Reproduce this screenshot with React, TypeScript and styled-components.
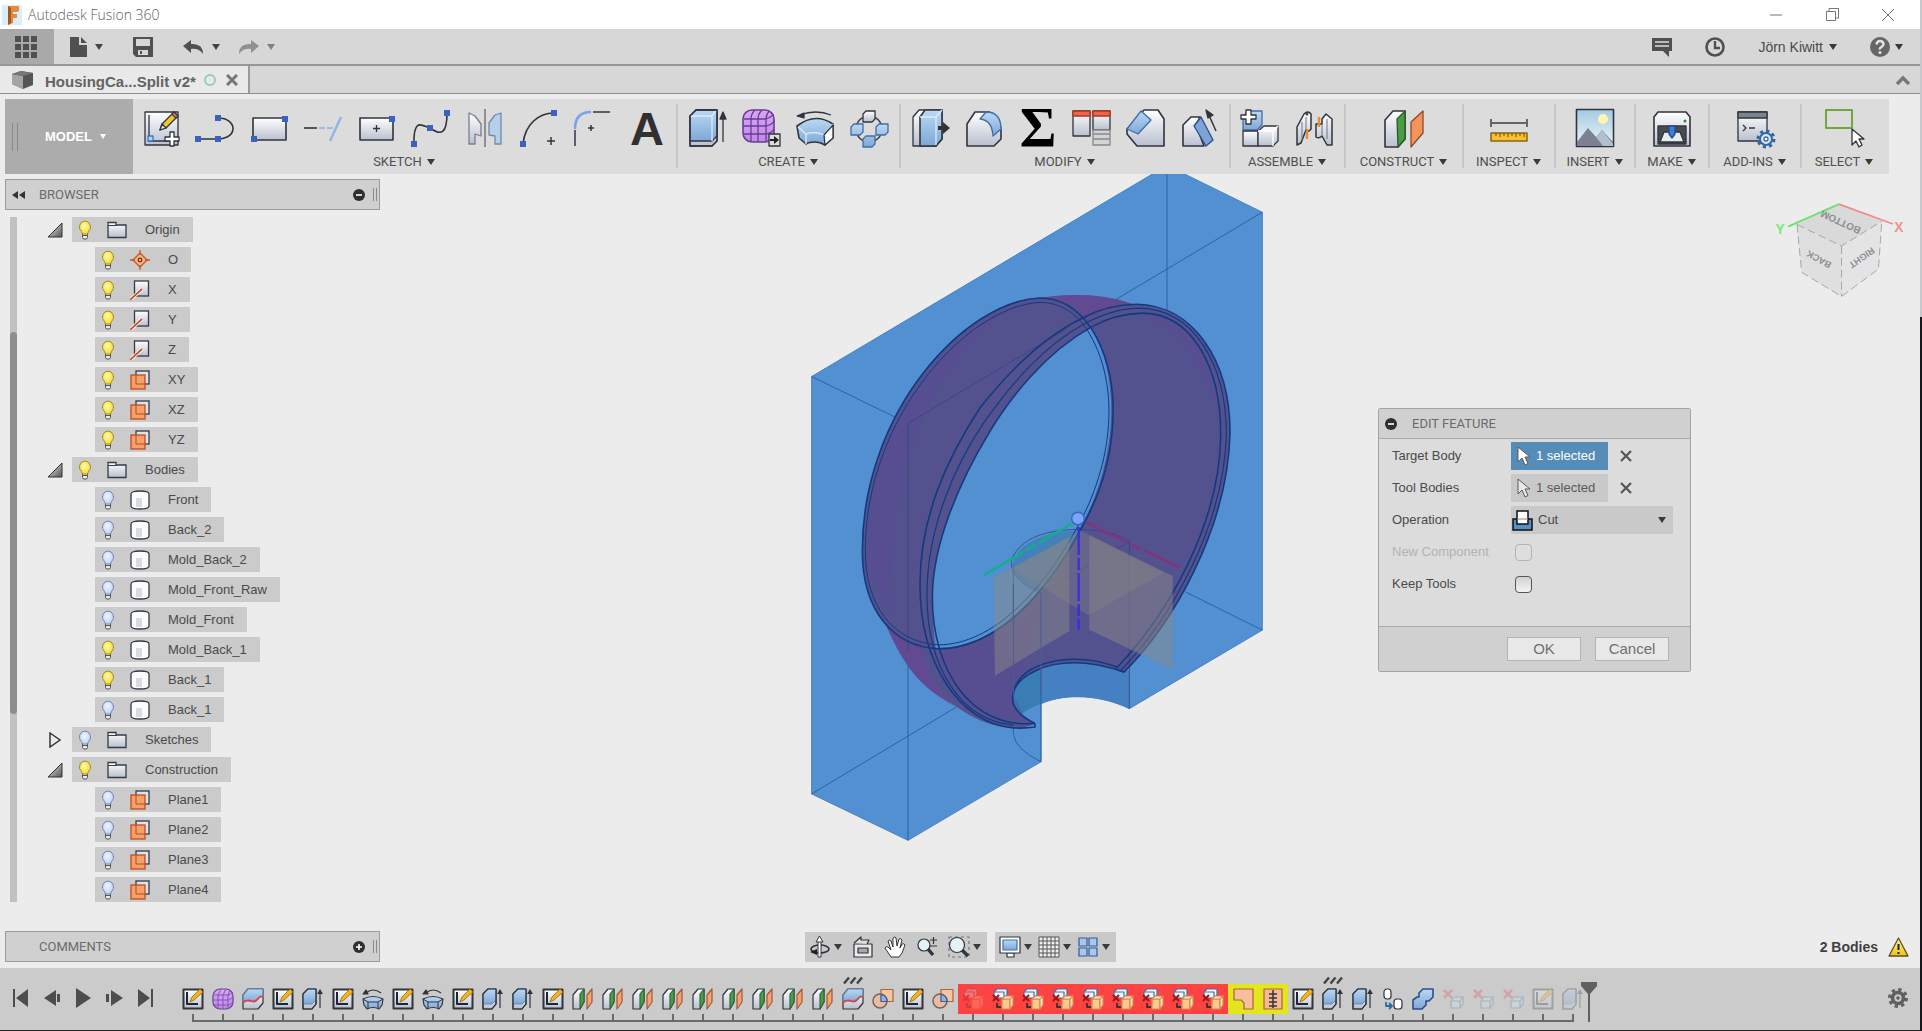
import React from 'react';
import styled, { createGlobalStyle } from 'styled-components';

const sans = '"Liberation Sans", Arial, sans-serif';
const caps = 'Roboto, "Liberation Sans", sans-serif';

const Global = createGlobalStyle`
  * { box-sizing: border-box; }
  html, body, #root { height: 100%; }
  body { margin: 0; font: 13px/16px ${sans}; color: #4a4a4a; background: #ececec; overflow: hidden; }
  button, select, input { font: inherit; color: inherit; margin: 0; }
  svg { display: block; flex: none; }
`;

/* ---------- shell ---------- */
const Screen = styled.div`
  display: flex;
  min-height: 100vh;
`;
const Shell = styled.div`
  flex: 1;
  min-width: 0;
  display: flex;
  flex-direction: column;
  background: #ececec;
  border-bottom: 1px solid #222;
`;
const DesktopEdge = styled.div`
  width: 2px;
  background: linear-gradient(#c4c8ca 0 317px, #16181b 317px);
`;
const IconButton = styled.button<{ $w?: number; $h?: number }>`
  display: flex;
  align-items: center;
  justify-content: center;
  width: ${p => (p.$w ? `${p.$w}px` : 'auto')};
  height: ${p => (p.$h ? `${p.$h}px` : 'auto')};
  padding: 0;
  border: 0;
  background: none;
  flex: none;
`;
const Caret = styled.span<{ $color?: string; $size?: number }>`
  display: inline-block;
  flex: none;
  width: 0;
  height: 0;
  border-style: solid;
  border-width: ${p => p.$size ?? 6}px ${p => (p.$size ?? 6) - 2}px 0;
  border-color: ${p => p.$color ?? '#3a3a3a'} transparent transparent;
`;

/* ---------- title bar ---------- */
const TitleBar = styled.header`
  display: flex;
  align-items: center;
  height: 29px;
  padding: 0 4px 0 2px;
  background: #fff;
`;
const Title = styled.h1`
  flex: 1;
  margin: 0 0 0 6px;
  font: 300 14px/20px "Open Sans", "Noto Sans", sans-serif;
  color: #5f5f5f;
`;
const WindowButtons = styled.div`
  display: flex;
`;

/* ---------- application bar ---------- */
const AppBar = styled.div`
  display: flex;
  align-items: stretch;
  height: 37px;
  background: #d7d7d7;
  border-bottom: 2px solid #979797;
`;
const GridButton = styled(IconButton)`
  width: 54px;
  padding-right: 3px;
  background: #a9a9a9;
`;
const AppTools = styled.div`
  display: flex;
  align-items: center;
  padding-left: 16px;
  gap: 30px;
  flex: 1;
`;
const History = styled.div`
  display: flex;
  align-items: center;
  gap: 18px;
`;
const MenuButton = styled(IconButton)<{ $gap?: number }>`
  gap: ${p => p.$gap ?? 8}px;
`;
const AppAccount = styled.div`
  display: flex;
  align-items: center;
  gap: 33px;
  padding-right: 17px;
  font-size: 14px;
`;

/* ---------- document tabs ---------- */
const TabBar = styled.div`
  display: flex;
  justify-content: space-between;
  height: 28px;
  background: #d7d7d7;
  border-bottom: 1px solid #8f8f8f;
`;
const Tab = styled.div`
  display: flex;
  align-items: center;
  width: 250px;
  padding-left: 12px;
  border-right: 2px solid #999;
  background: #e9e9e9;
`;
const TabName = styled.span`
  margin: 4px 8px 0 12px;
  font-weight: 700;
  font-size: 15px;
  color: #636363;
  white-space: nowrap;
`;
const TabState = styled.span`
  width: 12px;
  height: 12px;
  margin-right: 10px;
  border: 2px solid #93cfb4;
  border-radius: 50%;
`;

/* ---------- ribbon ---------- */
const Ribbon = styled.nav`
  display: flex;
  align-items: stretch;
  align-self: flex-start;
  height: 75px;
  margin: 5px 0 0 5px;
  background: #dcdcdc;
`;
const Workspace = styled.button`
  display: flex;
  align-items: center;
  width: 128px;
  padding: 0 0 0 7px;
  border: 0;
  background: #acacac;
  color: #fff;
  font-size: 13px;
  font-weight: 700;
  gap: 8px;
`;
const Grip = styled.span<{ $h: number }>`
  width: 6px;
  height: ${p => p.$h}px;
  border: solid #8a8a8a;
  border-width: 0 1px;
`;
const ModelName = styled.span`
  margin-left: 19px;
`;
const Group = styled.div<{ $w?: number }>`
  position: relative;
  display: flex;
  flex-direction: column;
  align-items: center;
  min-width: ${p => (p.$w ? `${p.$w}px` : '0')};
  padding: 9px 11px 0 8px;
  &:not(:last-child)::after {
    content: '';
    position: absolute;
    right: 0;
    top: 5px;
    width: 2px;
    height: 64px;
    background: #c6c6c6;
  }
`;
const GroupIcons = styled.div`
  display: flex;
  gap: 14px;
`;
const GroupLabel = styled.button`
  display: flex;
  align-items: center;
  gap: 5px;
  padding: 0;
  border: 0;
  background: none;
  margin-top: 6px;
  font: 13px/16px ${caps};
  color: #4f4f4f;
  white-space: nowrap;
`;

/* ---------- canvas ---------- */
const Viewport = styled.main`
  position: relative;
  flex: 1;
  min-height: 0;
  display: flex;
  flex-direction: column;
  justify-content: space-between;
  padding: 5px 5px 6px;
  overflow: hidden;
`;
const Scene = styled.div`
  position: absolute;
  top: 0;
  left: calc(50% - 180px);
`;
const CubeSpot = styled.div`
  position: absolute;
  top: 6px;
  right: 0;
`;
const PanelHead = styled.div`
  display: flex;
  align-items: center;
  width: 375px;
  height: 31px;
  padding: 0 2px 0 6px;
  border: 1px solid #9b9b9b;
  background: #d0d0d0;
  font: 13px/16px ${caps};
  color: #6b6b6b;
`;
const PanelTitle = styled.h2`
  flex: 1;
  margin: 0 0 0 14px;
  font: inherit;
`;
const PanelGrip = styled(Grip)`
  width: 4px;
  margin-left: 8px;
`;
const Browser = styled.section`
  position: relative;
  display: flex;
  flex-direction: column;
  width: 375px;
`;
const TreeArea = styled.div`
  display: flex;
  margin-top: 7px;
`;
const ScrollTrack = styled.div`
  width: 7px;
  margin-left: 5px;
  background: #c1c1c1;
`;
const ScrollThumb = styled.div`
  height: 382px;
  margin-top: 115px;
  border-radius: 4px;
  background: #8e8e8e;
`;
const Tree = styled.ul`
  margin: 0 0 0 30px;
  padding: 0;
  list-style: none;
  display: flex;
  flex-direction: column;
  gap: 5px;
`;
const TreeLine = styled.li<{ $child?: boolean }>`
  display: flex;
  align-items: center;
  gap: 9px;
  padding-left: ${p => (p.$child ? '48px' : '0')};
`;
const TreeRow = styled.div<{ $child?: boolean }>`
  display: flex;
  align-items: center;
  height: 25px;
  padding: 0 13px 0 6px;
  background: #cbcbcb;
  white-space: nowrap;
  & > svg { margin-right: 18px; margin-left: 15px; }
`;

const BottomRow = styled.div`
  position: relative;
  display: grid;
  grid-template-columns: 1fr auto 1fr;
  align-items: center;
`;
const NavBars = styled.div`
  display: flex;
  gap: 8px;
`;
const NavGroup = styled.div<{ $gap: number }>`
  display: flex;
  align-items: center;
  height: 30px;
  padding: 0 6px 0 4px;
  gap: ${p => p.$gap}px;
  background: #c9c9c9;
`;
const NavMenu = styled(MenuButton)`
  gap: 3px;
`;
const Status = styled.div`
  display: flex;
  align-items: center;
  justify-content: flex-end;
  gap: 10px;
  padding-right: 6px;
  font-size: 14px;
  font-weight: 700;
  color: #3f3f3f;
`;

/* ---------- dialog ---------- */
const Dialog = styled.form`
  position: absolute;
  top: 234px;
  right: 229px;
  width: 313px;
  border: 1px solid #a3a3a3;
  border-radius: 2px;
  background: #dcdcdc;
`;
const DialogHead = styled.div`
  display: flex;
  align-items: center;
  height: 30px;
  padding-left: 6px;
  gap: 15px;
  border-bottom: 1px solid #a9a9a9;
  background: #d0d0d0;
  font: 13px/16px ${caps};
  color: #6b6b6b;
`;
const DialogBody = styled.div`
  display: grid;
  grid-template-columns: 119px auto;
  grid-auto-rows: 28px;
  row-gap: 4px;
  align-items: center;
  padding: 3px 16px 28px 13px;
`;
const FieldLabel = styled.label<{ $off?: boolean }>`
  color: ${p => (p.$off ? '#b3b3b3' : '#4a4a4a')};
`;
const Field = styled.div`
  position: relative;
  display: flex;
  align-items: center;
  gap: 12px;
`;
const Picker = styled.button<{ $active?: boolean }>`
  display: flex;
  align-items: center;
  gap: 6px;
  width: 97px;
  height: 28px;
  padding: 0 0 0 6px;
  border: 0;
  background: ${p => (p.$active ? '#558cb8' : '#c9c9c9')};
  color: ${p => (p.$active ? '#fff' : '#5a5a5a')};
`;
const OperationSelect = styled.select`
  appearance: none;
  width: 162px;
  height: 28px;
  padding: 0 0 0 27px;
  border: 0;
  border-radius: 0;
  background: #c9c9c9;
`;
const OverLeft = styled.span`
  position: absolute;
  left: 1px;
  pointer-events: none;
`;
const OverRight = styled.span`
  position: absolute;
  right: 8px;
  display: flex;
  pointer-events: none;
`;
const Check = styled.input`
  appearance: none;
  width: 17px;
  height: 17px;
  margin-left: 4px;
  border: 1px solid #555;
  border-radius: 4px;
  background: linear-gradient(#d2d2d2, #f2f2f2);
  &:disabled { border-color: #b4b4b4; background: #dedede; }
`;
const DialogFoot = styled.div`
  display: flex;
  justify-content: flex-end;
  gap: 14px;
  padding: 10px 21px;
  border-top: 1px solid #a9a9a9;
  background: #d0d0d0;
`;
const DialogButton = styled.button`
  width: 74px;
  height: 24px;
  padding: 0;
  border: 1px solid #b3b3b3;
  background: #e8e8e8;
  font-size: 15px;
  color: #707070;
`;

/* ---------- timeline ---------- */
const Timeline = styled.footer`
  display: flex;
  align-items: flex-start;
  height: 62px;
  padding: 14px 12px 0 11px;
  background: #cbcbcb;
`;
const Transport = styled.div`
  display: flex;
  gap: 11px;
  padding-top: 6px;
  width: 167px;
`;
const Steps = styled.ol`
  display: flex;
  margin: 0;
  padding: 2px 0 0;
  list-style: none;
`;
const Step = styled.li<{ $tone?: string; $faded?: boolean }>`
  position: relative;
  width: 30px;
  & > button {
    width: 30px;
    height: 30px;
    background: ${p => (p.$tone === 'error' ? '#fd4242' : p.$tone === 'warn' ? '#e3e61c' : 'none')};
  }
  & > button > svg { opacity: ${p => (p.$faded ? 0.28 : 1)}; }
`;
const Tick = styled.span<{ $edge?: 'first' | 'last' }>`
  display: block;
  height: 8px;
  background:
    linear-gradient(#6a6a6a, #6a6a6a) center top / 2px 8px no-repeat,
    linear-gradient(#6a6a6a, #6a6a6a) ${p => (p.$edge === 'first' ? 'right' : 'left')} bottom / ${p => (p.$edge ? '16px' : '30px')} 2px no-repeat;
`;
const HatchMark = styled.span`
  position: absolute;
  top: -7px;
  left: 5px;
`;
const Marker = styled.svg`
  margin-left: -7px;
  position: relative;
`;
const TimelineEnd = styled.div`
  flex: 1;
  display: flex;
  justify-content: flex-end;
  padding-top: 5px;
`;

/* ---------- shared gradients ---------- */
const PaintSheet = styled.svg`
  position: absolute;
`;
const Paint = () => (
  <PaintSheet width="0" height="0" aria-hidden="true">
    <defs>
      <linearGradient id="gray" x1="0" y1="0" x2="0" y2="1"><stop offset="0" stopColor="#fff" /><stop offset="1" stopColor="#b9c0cf" /></linearGradient>
      <linearGradient id="blue" x1="0" y1="0" x2="0" y2="1"><stop offset="0" stopColor="#bcd9f3" /><stop offset="1" stopColor="#7ea6d6" /></linearGradient>
      <linearGradient id="violet" x1="0" y1="0" x2="0" y2="1"><stop offset="0" stopColor="#d9a5f5" /><stop offset="1" stopColor="#c08ae8" /></linearGradient>
      <linearGradient id="tri" x1="0" y1="0" x2="1" y2="1"><stop offset="0" stopColor="#eee" /><stop offset="1" stopColor="#555" /></linearGradient>
      <linearGradient id="sky" x1="0" y1="0" x2="0" y2="1"><stop offset="0" stopColor="#a3cbe4" /><stop offset="1" stopColor="#eef6f6" /></linearGradient>
      <linearGradient id="amber" x1="0" y1="0" x2="0" y2="1"><stop offset="0" stopColor="#fff6a0" /><stop offset="1" stopColor="#f2c500" /></linearGradient>
      <radialGradient id="lit" cx=".45" cy=".4" r=".6"><stop offset="0" stopColor="#fffbb0" /><stop offset="1" stopColor="#f5dc2a" /></radialGradient>
      <radialGradient id="unlit" cx=".45" cy=".4" r=".6"><stop offset="0" stopColor="#f0f5ff" /><stop offset="1" stopColor="#bfd2f5" /></radialGradient>
    </defs>
  </PaintSheet>
);

type Kids = { children: React.ReactNode };
const Big = ({ children }: Kids) => (
  <svg width="40" height="40" viewBox="0 0 40 40" overflow="visible" fill="none" stroke="#30343c" strokeWidth="1.3" strokeLinejoin="round">{children}</svg>
);
const Small = ({ children }: Kids) => (
  <svg width="22" height="22" viewBox="0 0 22 22" fill="none" stroke="#30343c" strokeWidth="1.2" strokeLinejoin="round">{children}</svg>
);
const Node = ({ x, y }: { x: number; y: number }) => <rect x={x - 3} y={y - 3} width="6" height="6" fill="#3b62bd" stroke="none" />;

const ribbonIcons: Record<string, React.ReactNode> = {
  'Create Sketch': <Big><rect x="4" y="4" width="33" height="33" fill="url(#gray)" /><path d="M8 7v26h20" /><rect x="7" y="28" width="5" height="5" stroke="#3b74c4" fill="#b4d2f2" /><path d="M19 22l2-6L33 4l4 4-12 12z" fill="#f4c430" /><path d="M31 6l2-2 4 4-2 2z" fill="#ef8a7a" /><path d="M19 22l2-6 4 4z" fill="#f8e6c2" /><path d="M29 24h4v5h5v4h-5v5h-4v-5h-5v-4h5z" fill="#fff" /></Big>,
  Line: <Big><path d="M3 31H23C43 31 43 10 23 10" strokeWidth="1.6" /><Node x={3} y={31} /><Node x={23} y={31} /><Node x={23} y={10} /></Big>,
  Rectangle: <Big><rect x="4" y="10" width="33" height="22" fill="url(#gray)" strokeWidth="1.6" /><Node x={36} y={11} /><Node x={5} y={31} /></Big>,
  Trim: <Big><path d="M1 20h13" strokeWidth="1.6" /><path d="M16 20h6M24 20h6" stroke="#84aee0" strokeWidth="1.6" /><path d="M38 9L27 33" stroke="#8fb5e6" strokeWidth="2.4" /></Big>,
  'Center Rectangle': <Big><rect x="3" y="10" width="33" height="22" fill="url(#gray)" strokeWidth="1.6" /><path d="M16 20.5h7M19.500 17v7" /><Node x={35} y={11} /></Big>,
  Spline: <Big><path d="M3 36C2 6 14 20 19 20C30 28 36 26 36 5" strokeWidth="1.6" /><Node x={3} y={36} /><Node x={19} y={20} /><Node x={36} y={5} /></Big>,
  Mirror: <Big><path d="M4 5l6 3 6 8v12l-6-2v10H4z" fill="url(#gray)" stroke="#777f8c" /><path d="M20 1v38" stroke="#666" /><path d="M36 5l-6 2-6 8v12l6 1v8h6z" fill="#b7d0ea" stroke="#6d8bb0" /></Big>,
  Arc: <Big><path d="M4 36C6 16 20 5 35 5" strokeWidth="1.7" /><Node x={4} y={36} /><Node x={35} y={5} /><path d="M28 33h8M32 29v8" strokeWidth="1.5" /></Big>,
  Fillet: <Big><path d="M2 38V22M20 4H37M15 20h6M18 17v6" strokeWidth="1.5" /><path d="M2 21C2 9 8 4 18 4" stroke="#79a3ea" strokeWidth="2.6" /></Big>,
  Text: <Big><text x="20" y="37" textAnchor="middle" fontFamily="Liberation Sans" fontWeight="700" fontSize="47" fill="#303030" stroke="none">A</text></Big>,
  Extrude: <Big><path d="M3 8l6-6h21v31l-5 5H3z" fill="url(#gray)" /><path d="M3 8l6-6h21v26l-5 5H3z" fill="url(#blue)" /><path d="M3 8h22v25M25 8l5-6" stroke="#d9ecff" /><path d="M3 8l6-6h21v31l-5 5H3z" /><path d="M36 34V8" /><path d="M36 4l-3 7h6z" fill="#30343c" /></Big>,
  'Create Form': <Big><rect x="2" y="2" width="31" height="32" rx="9" fill="url(#violet)" stroke="#6a3d94" strokeWidth="1.6" /><path d="M3 11h21q6-1 8-5M2 18h23q6-1 8-5M3 26h22q6-1 8-5M10 34V11q0-5 4-9M17 34V11q0-5 4-9M25 33V11q0-4 3-8" stroke="#6a3d94" /><rect x="28" y="26" width="11" height="12" fill="#ddd" /><path d="M29 31h4v-3l5 4-5 4v-3h-4z" fill="#222" stroke="none" /></Big>,
  Revolve: <Big><path d="M2 18q18-14 36-2v14l-8 7q-5-3-10-3-6 0-9 2l-7-6z" fill="url(#blue)" strokeWidth="1.6" /><path d="M3 19l8 7q9-3 18 1l9-11M11 26v10" stroke="#e0efff" /><path d="M29 27l9-10v13l-8 7z" fill="#fff" /><path d="M5 7q16-6 31 0" /><path d="M2 8l7-3v5z" fill="#30343c" /></Big>,
  Pattern: <Big><circle cx="20" cy="21" r="13" stroke="#444" strokeWidth="1.6" /><path d="M14 6l3-3h9v8l-3 3h-9z" fill="url(#gray)" /><path d="M2 19l3-3h9v8l-3 3H2zM27 19l3-3h9v8l-3 3h-9zM14 31l3-3h9v8l-3 3h-9z" fill="url(#blue)" stroke="#3f6ea8" /></Big>,
  'Press Pull': <Big><path d="M3 9l6-7h23v29l-6 7H3z" fill="url(#gray)" /><path d="M10 9l5-7h17v29l-6 7H10z" fill="url(#blue)" strokeWidth="1.6" /><path d="M10 9h16v28M26 9l6-7" stroke="#d9ecff" /><path d="M28 18h5v-4l7 6-7 6v-4h-5z" fill="#333" stroke="none" /></Big>,
  'Fillet Edge': <Big><path d="M3 16l8-12h14q12 4 12 20v7l-7 7H3z" fill="url(#gray)" strokeWidth="1.6" /><path d="M16 11l6-7q15 0 15 17l-8 7q-1-16-13-17z" fill="url(#blue)" stroke="#3f6ea8" /></Big>,
  'Change Parameters': <Big><text x="20" y="39" textAnchor="middle" fontFamily="Liberation Serif" fontWeight="700" fontSize="56" fill="#000" stroke="none">Σ</text></Big>,
  Table: <Big><rect x="1" y="3" width="17" height="25" fill="url(#gray)" /><rect x="21" y="3" width="17" height="19" fill="url(#gray)" /><path d="M1 3h17v5H1zM21 3h17v5H21z" fill="#f0644a" stroke="#a33a28" /><path d="M21 22h17v4H21zM21 26h17v5H21zM21 31h17v6H21z" fill="#d2d4d8" stroke="#888" /></Big>,
  Chamfer: <Big><path d="M1 21L18 2h14l6 9v27H11L1 26z" fill="url(#gray)" strokeWidth="1.6" /><path d="M1 21L15 3l10 9-13 14z" fill="url(#blue)" stroke="#3f6ea8" /></Big>,
  Draft: <Big><path d="M3 17l8-8h9l-4 8 8 21H3z" fill="url(#gray)" strokeWidth="1.6" /><path d="M14 18l7-9 12 23-7 6z" fill="#7ea3d8" stroke="#274f8a" /><path d="M36 23L28 5" strokeWidth="1.5" /><path d="M26 2l7 5-5 3z" fill="#30343c" /></Big>,
  'New Component': <Big><path d="M3 9l5-6h14v14l-5 5H3z" fill="url(#blue)" stroke="#3f6ea8" /><path d="M3 23h15v15H3z" fill="url(#gray)" /><path d="M18 23l6-5h14v15l-5 5H18z" fill="url(#gray)" /><path d="M18 23h15v15M33 23l5-5" stroke="#fff" /><path d="M6 2h5v5h5v4h-5v5H6v-5H1V7h5z" fill="#fff" /></Big>,
  Joint: <Big><path d="M3 19l7-13q4-4 7 0v15q-3 4-5 1L7 35l-4 2z" fill="url(#gray)" strokeWidth="1.5" /><path d="M38 11l-6-5-4 5v5h-6v13q3 2 6-1l5 9 5 0z" fill="url(#gray)" strokeWidth="1.5" /><path d="M13 21v10M25 9v10" stroke="#ef8a30" strokeWidth="2.4" /><path d="M28 16v12M12 22V9M33 11v20M8 14v18" stroke="#6f7682" strokeWidth="1" /><circle cx="13" cy="6" r="1.500" fill="#444" stroke="none" /></Big>,
  Construct: <Big><path d="M1 12L9 3h12v28l-7 8H1z" fill="url(#gray)" strokeWidth="1.6" /><path d="M13 11l8-8v28l-7 8z" fill="#4b9b47" stroke="#235f26" /><path d="M27 14l12-11v22L27 39z" fill="#f4935a" stroke="#8c4b28" /></Big>,
  Inspect: <Big><path d="M2 15h36M2 11v8M38 11v8" stroke="#666" strokeWidth="2" /><rect x="2" y="25" width="36" height="8" fill="#f7bf31" stroke="#8a6412" strokeWidth="1.500" /><path d="M7 25v3M11 25v4M15 25v3M19 25v4M23 25v3M27 25v4M31 25v3M35 25v4" stroke="#6b4f14" strokeWidth="1" /></Big>,
  Insert: <Big><rect x="1.500" y="1.500" width="37" height="37" fill="url(#sky)" strokeWidth="1.600" /><circle cx="28" cy="11" r="5" fill="#fff5ae" stroke="none" /><path d="M2 34l11-14 8 9 6-7 11 12v4H2z" fill="#7b8092" stroke="none" /><path d="M21 29l6-7 11 14v2H28z" fill="#b2bfce" stroke="none" /></Big>,
  Make: <Big><path d="M6 4h28l4 5v29H2V9z" fill="url(#gray)" strokeWidth="1.600" /><rect x="6" y="18" width="28" height="18" fill="#474b52" /><path d="M12 24h16l4 10H8z" fill="#e8ecf0" /><path d="M17 18h6v8l-3 4-3-4z" fill="#3c7fd6" stroke="#1e4b94" /><circle cx="33" cy="13" r="1.500" fill="#2e8a2e" stroke="none" /></Big>,
  'Add-ins': <Big><rect x="3" y="4" width="29" height="29" fill="url(#gray)" /><rect x="3" y="4" width="29" height="6" fill="#7b828f" /><path d="M8 17l3 3-3 3M14 20h6" /><circle cx="31" cy="31" r="6" fill="#d8e8fa" stroke="#3466a5" strokeWidth="2" /><circle cx="31" cy="31" r="8" stroke="#3466a5" strokeWidth="3" strokeDasharray="3.140 3.140" /><circle cx="31" cy="31" r="2" fill="#fff" stroke="#3466a5" /></Big>,
  Select: <Big><rect x="2" y="2" width="26" height="18" stroke="#72a83a" strokeWidth="2" /><path d="M28 21v16l4-4 3 6 3-2-3-6h5z" fill="#fff" /></Big>,
};

const stepIcons: Record<string, React.ReactNode> = {
  Sketch: <><rect x="1.500" y="1.500" width="19" height="19" fill="url(#gray)" strokeWidth="2" /><path d="M5 4v12h11" stroke="#1c2733" strokeWidth="2" /><path d="M8 14l2-5 8-8 3 3-9 8z" fill="#f5b21e" stroke="#8d6a1a" strokeWidth=".8" /></>,
  Extrude: <><path d="M1 6l5-5h8v15l-4 5H1z" fill="url(#gray)" /><path d="M1 6l5-5h8v11l-4 4H1z" fill="url(#blue)" stroke="#557fb4" strokeWidth=".8" /><path d="M1 6l5-5h8v15l-4 5H1z" /><path d="M18 20V4" /><path d="M18 1l-3 5h6z" fill="#30343c" stroke="none" /></>,
  Plane: <><path d="M1 7l5-6h6v13l-4 7H1z" fill="url(#gray)" /><path d="M8 6l4-5v13l-4 7z" fill="#4e9b52" stroke="#2d6a33" /><path d="M15 7l5-6v13l-5 7z" fill="#f6a274" stroke="#a05a38" /></>,
  Split: <><path d="M1 7l5-6h15v14l-5 6H1z" fill="url(#gray)" /><path d="M1 7l5-6h15v8q-4-1-6 2t-8 2-6 1z" fill="url(#blue)" stroke="#5f7fa6" /><path d="M1 15q4-4 8-2t7-2 5-2" stroke="#e2453c" strokeWidth="1.600" /></>,
  Form: <><rect x="1" y="1" width="20" height="20" rx="7" fill="url(#violet)" stroke="#6a3d94" /><path d="M2 7h15l4-3M1 12h16l4-3M2 17h15l4-3M6 21V7l3-6M11 21V7l3-6M16 21V7l2-5" stroke="#8655b3" strokeWidth="1" /></>,
  Revolve: <><path d="M1 11q10-5 20 0l-1 6-3 4q-6-3-12 0l-3-4z" fill="url(#blue)" strokeWidth="1.200" /><path d="M1 11l5 3h10l5-3M6 14v6M16 14v6" strokeWidth="1" /><path d="M4 5q7-6 15 0" /><path d="M1 6l3-4 2 4z" fill="#30343c" /></>,
  Error: <><path d="M2 4l3-3h10v6l-3 3H2z" fill="#eef5fb" stroke="#4a6f9c" /><path d="M2 4h10v6" stroke="#4a6f9c" /><path d="M10 11h8v10h-8z" fill="#fbc98f" stroke="#d98a4c" /><path d="M10 11l3-3h8l-3 3zM18 11l3-3v9l-3 4z" fill="#fde3c6" stroke="#d98a4c" /><path d="M1 7l6 6M7 7l-6 6" stroke="#a81414" strokeWidth="2" /><path d="M5 15v4h4" strokeWidth="1.800" /></>,
  Intersect: <><rect x="9" y="1.500" width="12" height="12" fill="#f8c3a0" stroke="#a8643c" /><circle cx="8" cy="13" r="7" fill="#f6b791" fillOpacity=".7" stroke="#7b6258" strokeWidth="1.500" /><path d="M9 6.500q6 1 6 7H9z" fill="#8fb5e6" stroke="#345f9c" /></>,
  Patch: <path d="M2 1h19v20h-9v-6l-3-3H2z" fill="#f8c09a" stroke="#a8643c" />,
  Stitch: <><rect x="2" y="1" width="18" height="20" fill="#f8b894" stroke="#a8643c" /><path d="M11 2v18M7 6h8M7 10h8M7 14h8M7 18h8" strokeWidth="1.500" /></>,
  Copy: <><rect x="2" y="1" width="7" height="10" rx="3" fill="#fff" /><rect x="12" y="11" width="8" height="10" rx="3" fill="#fff" /><path d="M4 14v4h5M7 15l3 3-3 3" stroke="#2c6aa8" strokeWidth="1.800" /></>,
  Combine: <path d="M1 12l4-3h2V5l4-4h10v8l-4 4h-3v4l-4 4H1z" fill="url(#blue)" stroke="#2b4f86" strokeWidth="1.600" />,
  Remove: <><path d="M2 2l8 8M10 2l-8 8" stroke="#e04444" strokeWidth="2.600" /><path d="M9 13l3-4h9v7l-3 4H9z" fill="#cfe9f5" stroke="#3b7a9a" /><path d="M9 13h9v7M18 13l3-4" stroke="#3b7a9a" /></>,
};

type StepData = { kind: string; tone?: 'error' | 'warn'; faded?: boolean; hatch?: boolean };
const s = (kind: string, extra: Partial<StepData> = {}): StepData => ({ kind, ...extra });
const many = (n: number, step: StepData) => Array.from({ length: n }, () => step);
const steps: StepData[] = [
  s('Sketch'), s('Form'), s('Split'), s('Sketch'), s('Extrude'), s('Sketch'), s('Revolve'), s('Sketch'), s('Revolve'),
  s('Sketch'), s('Extrude'), s('Extrude'), s('Sketch'), ...many(9, s('Plane')), s('Split', { hatch: true }),
  s('Intersect'), s('Sketch'), s('Intersect'), s('Error', { tone: 'error', faded: true }), ...many(8, s('Error', { tone: 'error' })),
  s('Patch', { tone: 'warn' }), s('Stitch', { tone: 'warn' }), s('Sketch'), s('Extrude', { hatch: true }), s('Extrude'),
  s('Copy'), s('Combine'), ...many(3, s('Remove', { faded: true })), s('Sketch', { faded: true }), s('Extrude', { faded: true }),
];

/* ---------- browser tree ---------- */
const Bulb = ({ on }: { on: boolean }) => (
  <svg width="14" height="20" viewBox="0 0 14 20" aria-hidden="true">
    <path d="M4.500 13h5v4.500l-1 1.500h-3l-1-1.500z" fill="#e8e8e8" stroke="#555" />
    <path d="M7 1a6 6 0 0 1 3.500 10.500L9.500 14h-5l-1-2.500A6 6 0 0 1 7 1z" fill={on ? 'url(#lit)' : 'url(#unlit)'} stroke={on ? '#a08a2a' : '#7186b0'} />
    <path d="M4.500 15.500h5" stroke="#555" />
  </svg>
);
const treeIcons: Record<string, React.ReactNode> = {
  folder: <svg width="20" height="20" viewBox="0 0 20 20"><path d="M1 17V2.500h8V5h10v12.500H1z" fill="url(#gray)" stroke="#333b48" strokeWidth="1.300" /><path d="M1 5.500h8L10 5" stroke="#333b48" fill="none" /></svg>,
  origin: <svg width="20" height="20" viewBox="0 0 20 20"><path d="M10 3l7 7-7 7-7-7z" fill="#f7b48a" stroke="#c45a24" strokeWidth="1.300" /><path d="M10 0v5M10 15v5M0 10h5M15 10h5" stroke="#c45a24" strokeWidth="1.300" /><circle cx="10" cy="10" r="1.800" fill="#f7b48a" stroke="#7a3010" strokeWidth="1.300" /></svg>,
  axis: <svg width="20" height="20" viewBox="0 0 20 20"><rect x="4.500" y="1" width="14" height="15" fill="url(#gray)" stroke="#333b48" strokeWidth="1.300" /><path d="M0 20L12 9" stroke="#fff" strokeWidth="3.500" /><path d="M0 20L12 9" stroke="#c0562c" strokeWidth="1.800" /></svg>,
  plane: <svg width="20" height="20" viewBox="0 0 20 20"><rect x="6" y="1" width="13" height="13" fill="#dde3ec" stroke="#333b48" strokeWidth="1.300" /><rect x="1" y="5" width="14" height="14" fill="#fa9f66" stroke="#c0562c" strokeWidth="1.400" /><path d="M6 5v9h9" stroke="#a3552a" fill="none" /></svg>,
  body: <svg width="20" height="20" viewBox="0 0 20 20"><path d="M1 4q0-3 9-3t9 3v12q0 3-9 3t-9-3z" fill="#fbfbfc" stroke="#333b48" strokeWidth="1.300" /><path d="M6 8h6v9H6z" fill="#d9dbdf" /></svg>,
};
type Item = [label: string, icon: string, lit: boolean, open?: boolean];
const tree: Item[] = [
  ['Origin', 'folder', true, true], ['O', 'origin', true], ['X', 'axis', true], ['Y', 'axis', true], ['Z', 'axis', true],
  ['XY', 'plane', true], ['XZ', 'plane', true], ['YZ', 'plane', true], ['Bodies', 'folder', true, true],
  ['Front', 'body', false], ['Back_2', 'body', false], ['Mold_Back_2', 'body', false], ['Mold_Front_Raw', 'body', false],
  ['Mold_Front', 'body', false], ['Mold_Back_1', 'body', true], ['Back_1', 'body', true], ['Back_1', 'body', false],
  ['Sketches', 'folder', false, false], ['Construction', 'folder', true, true],
  ['Plane1', 'plane', false], ['Plane2', 'plane', false], ['Plane3', 'plane', false], ['Plane4', 'plane', false],
];
const Twisty = ({ open }: { open: boolean }) => (
  <IconButton aria-label={open ? 'Collapse' : 'Expand'}>
    <svg width="16" height="16" viewBox="0 0 16 16">
      {open ? <path d="M15 1v14H1z" fill="url(#tri)" stroke="#333" /> : <path d="M3 1l10 7-10 7z" fill="none" stroke="#333" strokeWidth="1.500" />}
    </svg>
  </IconButton>
);
const RoundMark = ({ plus }: { plus?: boolean }) => (
  <svg width="12" height="12" viewBox="0 0 12 12"><circle cx="6" cy="6" r="6" fill="#2f2f2f" /><path d={plus ? 'M3 6h6M6 3v6' : 'M3 6h6'} stroke="#fff" strokeWidth="1.600" /></svg>
);
const Cross = () => (
  <svg width="12" height="12" viewBox="0 0 12 12"><path d="M1 1l10 10M11 1L1 11" stroke="#555" strokeWidth="2.200" /></svg>
);
const Pointer = ({ light }: { light?: boolean }) => (
  <svg width="13" height="20" viewBox="0 0 13 20"><path d="M1 1v15l4-4 3 7 3-1.500-3-6.500h5z" fill={light ? '#fff' : '#e8e8e8'} stroke="#5a5a5a" /></svg>
);

/* ---------- mold block with clamped ring ---------- */
const edge = { vectorEffect: 'non-scaling-stroke' as const };
const Model = () => (
  <svg width="520" height="686" viewBox="0 14 520 686" aria-label="Mold model">
    <g transform="scale(.33333 .44643)" fill="none" strokeLinejoin="round">
      <path d="M95 485L1161 12 1447 117V1053L1048 1229C970 1200 860 1192 783 1218V1348L384 1524 95 1420z" fill="#5290d1" stroke="#4583c4" strokeWidth="1" {...edge} />
      <path d="M783 1140C850 1120 960 1120 1048 1145V1229C970 1200 860 1192 783 1218z" fill="#4480c2" />
      <path d="M700 1200Q700 1160 783 1135V1218Q700 1240 700 1275z" fill="#3a7cb4" />
      <path {...edge} stroke="#2b62a8" strokeWidth="1" d="M95 485L384 590 1447 117M384 590V1524M1161 12V350M95 1420L530 1225M1447 1053L1215 967M783 970V1348M700 905V1285Q705 1320 783 1348" />
      <path fill="#53528f" fillRule="evenodd" d="M765 1262C740 1272 720 1272 700 1272C610 1268 560 1240 500 1210C420 1180 370 1130 320 1045C270 1000 247 940 247 870C250 560 560 312 780 309C880 298 970 300 1060 323C1240 325 1350 450 1350 610C1345 820 1180 1040 1032 1147C920 1118 830 1122 770 1143C690 1170 660 1225 765 1262zM932 375C800 430 690 530 620 620C540 720 457 860 457 980Q457 1040 467 1093C640 1095 790 980 895 830C1000 700 1035 500 932 375z" />
      <path fill="#654893" fillOpacity=".75" d="M780 309C880 298 970 300 1060 323C1000 325 950 345 920 355C870 315 830 312 780 309zM320 1045C370 1130 420 1180 520 1222C460 1180 440 1150 425 1085C380 1080 345 1065 320 1045z" />
      <path fill="#5d4794" fillOpacity=".35" d="M256 900C260 640 430 420 700 330C480 440 330 640 330 1020zM1090 345C1200 345 1290 430 1315 560C1260 440 1180 380 1090 345zM470 1100C650 1090 760 1010 800 980L700 1200 740 1255C600 1260 500 1200 470 1100z" />
      <path {...edge} d="M384 590L860 378M384 590V1100M783 970L1048 855V1229M1048 855C990 820 800 815 730 860S700 940 783 970" stroke="#34457f" strokeOpacity=".8" />
      <path d="M700 905C700 870 780 830 896 830C850 900 800 960 783 970Q700 950 700 905z" fill="#3878aa" fillOpacity=".6" />
      <g stroke="#133a80" strokeWidth="1.600">
        <path {...edge} d="M932 375C890 330 840 309 780 309C560 315 247 560 247 875C247 1010 340 1090 475 1095C650 1095 800 970 900 830C1010 690 1040 500 932 375" />
        <path {...edge} strokeWidth="1" d="M920 379C880 335 830 319 780 319C570 325 256 570 256 875C256 1000 340 1080 475 1086C640 1086 790 962 890 825C1000 680 1025 500 920 379" />
        <path {...edge} d="M765 1262V1270C740 1273 720 1273 700 1272C540 1262 420 1130 420 950C420 800 500 670 600 555C680 480 780 400 905 355C950 337 1000 323 1070 323C1240 325 1350 450 1350 610C1345 820 1180 1040 1032 1147L1005 1140" />
        <path {...edge} d="M765 1262C570 1275 457 1140 457 980C457 860 540 720 620 620C690 530 800 430 932 375C980 355 1030 343 1090 343C1240 345 1325 470 1322 620C1318 820 1160 1020 1010 1138" />
        <path {...edge} strokeWidth="1.200" d="M700 1266C540 1255 441 1135 441 975C440 830 520 690 610 590C690 505 790 415 918 365C965 347 1015 332 1080 332C1240 335 1339 455 1339 615C1332 820 1170 1030 1023 1143" />
        <path {...edge} d="M1032 1147C920 1118 830 1122 770 1143C690 1170 660 1225 765 1262M1015 1137C920 1110 830 1115 770 1135C720 1150 700 1180 700 1200" />
      </g>
      <g fill="#8a8888" fillOpacity=".5">
        <path d="M640 935L868 845V1055L645 1155zM928 840L1178 932V1142L928 1052z" />
        <path d="M696 915L925 1020 1150 925 900 830z" fillOpacity=".35" />
      </g>
      <path {...edge} d="M700 1200V950M783 1200V970" stroke="#4b5c97" />
      <path {...edge} d="M612 930L880 812" stroke="#0bb389" strokeWidth="2.400" strokeDasharray="46 3 12 3" />
      <path {...edge} d="M918 812L1200 913" stroke="#8c2f7c" strokeWidth="2.200" strokeDasharray="46 3 12 3" />
      <path {...edge} d="M896 822V1052" stroke="#3b2fd8" strokeWidth="2.400" strokeDasharray="28 3 12 3" />
      <ellipse {...edge} cx="894" cy="803" rx="19" ry="14" fill="#78a6f8" stroke="#3b66c0" strokeWidth="1.500" />
    </g>
  </svg>
);

const ViewCube = () => (
  <svg width="180" height="130" viewBox="0 0 546 394" aria-label="View cube" fontFamily="Liberation Sans" fontWeight="700">
    <path d="M300 72L173 135 308 200 430 125z" fill="#d9d9d9" />
    <path d="M173 135L308 200V353L187 280z" fill="#dfdfe0" />
    <path d="M308 200L430 125 420 270 308 353z" fill="#e4e4e5" />
    <path d="M173 135L308 200 430 125M173 135L187 280 308 353 420 270 430 125M308 200V353" fill="none" stroke="#a6a6a6" strokeWidth="3" strokeDasharray="24 12" />
    <path d="M146 141L300 73" stroke="#6de06d" strokeWidth="6" />
    <path d="M300 73L464 133" stroke="#f08a8a" strokeWidth="5" />
    <g fill="#8b8f96" textAnchor="middle" fontSize="28">
      <text transform="translate(310 118) rotate(205)" fontSize="30">BOTTOM</text>
      <text transform="translate(244 232) rotate(209)">BACK</text>
      <text transform="translate(364 228) rotate(145)">RIGHT</text>
    </g>
    <text x="108" y="164" fontSize="42" fill="#7be87b">Y</text>
    <text x="468" y="157" fontSize="42" fill="#f58f8f">X</text>
  </svg>
);

/* ---------- ribbon data ---------- */
const groups: { label: string; w?: number; tools: string[] }[] = [
  { label: 'SKETCH', w: 545, tools: ['Create Sketch', 'Line', 'Rectangle', 'Trim', 'Center Rectangle', 'Spline', 'Mirror', 'Arc', 'Fillet', 'Text'] },
  { label: 'CREATE', w: 223, tools: ['Extrude', 'Create Form', 'Revolve', 'Pattern'] },
  { label: 'MODIFY', w: 330, tools: ['Press Pull', 'Fillet Edge', 'Change Parameters', 'Table', 'Chamfer', 'Draft'] },
  { label: 'ASSEMBLE', w: 115, tools: ['New Component', 'Joint'] },
  { label: 'CONSTRUCT', w: 118, tools: ['Construct'] },
  { label: 'INSPECT', w: 92, tools: ['Inspect'] },
  { label: 'INSERT', w: 80, tools: ['Insert'] },
  { label: 'MAKE', w: 74, tools: ['Make'] },
  { label: 'ADD-INS', w: 92, tools: ['Add-ins'] },
  { label: 'SELECT', w: 87, tools: ['Select'] },
];

const transport: [string, string][] = [
  ['First', 'M1 1h2v18H1zM16 1v18L4 10z'],
  ['Previous', 'M13 2v16L1 10zM14 6h3v8h-3z'],
  ['Play', 'M2 0v20l15-10z'],
  ['Next', 'M6 2v16l12-8zM1 6h3v8H1z'],
  ['Last', 'M2 1v18l12-9zM15 1h2v18h-2z'],
];

const HatchIcon = () => (
  <svg width="20" height="7" viewBox="0 0 20 7"><path d="M1 6.500l5-6M7.500 6.500l5-6M14 6.500l5-6" stroke="#444" strokeWidth="2.400" /></svg>
);

export default function App() {
  return (
    <Screen>
      <Global />
      <Paint />
      <Shell>
        <TitleBar>
          <svg width="20" height="20" viewBox="0 0 20 20"><rect width="20" height="20" fill="#d8eef8" /><path d="M6 1h11v5l-2 1h-4v2h4v4h-4v5l-5 2z" fill="#e8893a" /><path d="M6 1l3 2v15l-3 2z" fill="#a9561b" /></svg>
          <Title>Autodesk Fusion 360</Title>
          <WindowButtons>
            <IconButton $w={56} $h={29} aria-label="Minimize"><svg width="12" height="12" viewBox="0 0 12 12"><path d="M0 6h12" stroke="#777" /></svg></IconButton>
            <IconButton $w={56} $h={29} aria-label="Restore"><svg width="13" height="13" viewBox="0 0 13 13" fill="none" stroke="#777"><path d="M.5 3.500h9v9h-9zM3 3V.5h9.500V10H10" /></svg></IconButton>
            <IconButton $w={56} $h={29} aria-label="Close"><svg width="12" height="12" viewBox="0 0 12 12"><path d="M0 0l12 12M12 0L0 12" stroke="#777" /></svg></IconButton>
          </WindowButtons>
        </TitleBar>

        <AppBar>
          <GridButton aria-label="Data panel">
            <svg width="22" height="22" viewBox="0 0 22 22" fill="#505050">{[0, 8, 16].map(x => [0, 8, 16].map(y => <rect key={`${x}-${y}`} x={x} y={y} width="6" height="6" />))}</svg>
          </GridButton>
          <AppTools>
            <MenuButton aria-label="File"><svg width="17" height="20" viewBox="0 0 17 20"><path d="M0 0h9v8h8v12H0zM11 0l6 6h-6z" fill="#505050" /></svg><Caret $color="#444" /></MenuButton>
            <IconButton aria-label="Save"><svg width="20" height="20" viewBox="0 0 20 20"><path fillRule="evenodd" d="M0 0h20v20H3l-3-3zM3 2v7h14V2zM5 13v5h10v-5zM7 14h2v3H7z" fill="#505050" /></svg></IconButton>
            <History>
              <MenuButton aria-label="Undo"><svg width="21" height="14" viewBox="0 0 21 14"><path d="M0 6l8-6v4q12-1 12 10-4-6-12-5v4z" fill="#505050" /></svg><Caret $color="#444" /></MenuButton>
              <MenuButton aria-label="Redo"><svg width="21" height="14" viewBox="0 0 21 14"><path d="M21 6l-8-6v4Q1 3 1 14q4-6 12-5v4z" fill="#909090" /></svg><Caret $color="#808080" /></MenuButton>
            </History>
          </AppTools>
          <AppAccount>
            <IconButton aria-label="Messages"><svg width="20" height="20" viewBox="0 0 20 20"><path d="M0 1h20v13h-3v6l-6-6H0z" fill="#505050" /><path d="M3 5h14M3 9h14" stroke="#ddd" strokeWidth="1.500" /></svg></IconButton>
            <IconButton aria-label="Job status"><svg width="20" height="20" viewBox="0 0 20 20" fill="none" stroke="#505050"><circle cx="10" cy="10" r="8.500" strokeWidth="2.600" /><path d="M10 4v7h5" strokeWidth="2.400" /></svg></IconButton>
            <MenuButton $gap={6}>Jörn Kiwitt<Caret /></MenuButton>
            <MenuButton $gap={5} aria-label="Help"><svg width="20" height="20" viewBox="0 0 20 20"><circle cx="10" cy="10" r="10" fill="#666" /><path d="M6.500 7.500Q7 4 10 4t3.500 3q0 2-2 3T10 12.500" fill="none" stroke="#e4e4e4" strokeWidth="2.400" /><circle cx="10" cy="15.500" r="1.500" fill="#e4e4e4" /></svg><Caret /></MenuButton>
          </AppAccount>
        </AppBar>

        <TabBar>
          <Tab>
            <svg width="21" height="20" viewBox="0 0 21 20"><path d="M0 4l9-3 12 2v12l-10 4L0 14z" fill="#555" /><path d="M0 4l11 2v13L0 14z" fill="#a5a5a5" /><path d="M0 4l9-3 12 2-10 3z" fill="#777" /></svg>
            <TabName>HousingCa...Split v2*</TabName>
            <TabState />
            <IconButton aria-label="Close tab"><svg width="12" height="12" viewBox="0 0 12 12"><path d="M1 1l10 10M11 1L1 11" stroke="#777" strokeWidth="3" /></svg></IconButton>
          </Tab>
          <IconButton $w={34} aria-label="Collapse toolbar"><svg width="14" height="10" viewBox="0 0 14 10"><path d="M1 9l6-6 6 6" stroke="#777" strokeWidth="3.500" fill="none" /></svg></IconButton>
        </TabBar>

        <Ribbon aria-label="Tools">
          <Workspace><Grip $h={28} /><ModelName>MODEL</ModelName><Caret $color="#fff" $size={5} /></Workspace>
          {groups.map(g => (
            <Group key={g.label} $w={g.w}>
              <GroupIcons>{g.tools.map(t => <IconButton key={t} aria-label={t} $w={40} $h={40}>{ribbonIcons[t]}</IconButton>)}</GroupIcons>
              <GroupLabel>{g.label}<Caret /></GroupLabel>
            </Group>
          ))}
        </Ribbon>

        <Viewport>
          <Scene><Model /></Scene>
          <CubeSpot><ViewCube /></CubeSpot>
          <Browser>
            <PanelHead>
              <svg width="13" height="8" viewBox="0 0 13 8"><path d="M6 0v8L0 4zM13 0v8L7 4z" fill="#333" /></svg>
              <PanelTitle>BROWSER</PanelTitle>
              <IconButton aria-label="Hide browser"><RoundMark /></IconButton>
              <PanelGrip $h={13} />
            </PanelHead>
            <TreeArea>
              <ScrollTrack><ScrollThumb /></ScrollTrack>
              <Tree>
                {tree.map(([label, icon, lit, open], i) => {
                  const child = open === undefined;
                  return (
                    <TreeLine key={i} $child={child}>
                      {!child && <Twisty open={!!open} />}
                      <TreeRow $child={child}>
                        <IconButton aria-label={`Show ${label}`}><Bulb on={lit} /></IconButton>
                        {treeIcons[icon]}
                        {label}
                      </TreeRow>
                    </TreeLine>
                  );
                })}
              </Tree>
            </TreeArea>
          </Browser>

          <BottomRow>
            <PanelHead>
              <svg width="13" height="8" aria-hidden="true" />
              <PanelTitle>COMMENTS</PanelTitle>
              <IconButton aria-label="Show comments"><RoundMark plus /></IconButton>
              <PanelGrip $h={13} />
            </PanelHead>
            <NavBars>
              <NavGroup $gap={10}>
                <NavMenu aria-label="Orbit"><Small><ellipse cx="11" cy="13" rx="9" ry="4" strokeWidth="1.600" /><path d="M9 5h3v16H9z" fill="#fff" strokeWidth="1" /><path d="M10.500 0L7 6h7z" fill="#fff" strokeWidth="1" /><path d="M1 16l7-3v6z" fill="#222" stroke="none" /></Small><Caret /></NavMenu>
                <IconButton aria-label="Look at"><Small><path d="M2 8h18v13H2z" fill="#e9e9e9" /><path d="M6 12h10v5H6z" fill="#aaa" /><path d="M2 7l7-6v3h8l-2 4" fill="#ddd" /></Small></IconButton>
                <IconButton aria-label="Pan"><Small><path d="M7 21L1 12q1-2 3-1l3 3-3-9q2-2 3 0l2 6V2q2-2 3 0l1 8 2-7q2-1 3 1l-2 8 2-4q2-1 3 1l-3 8-3 4z" fill="#fff" strokeWidth="1" /></Small></IconButton>
                <IconButton aria-label="Zoom"><Small><path d="M12 13l5 6" strokeWidth="3.400" /><circle cx="8" cy="9" r="6" fill="#e6f1f4" /><path d="M14 4h7M17.500 1v7M14 10h7" /></Small></IconButton>
                <NavMenu aria-label="Fit"><Small><rect x="1" y="1" width="20" height="20" strokeDasharray="3 3" stroke="#777" /><path d="M14 14l6 6" strokeWidth="3.400" /><circle cx="9" cy="9" r="7.500" fill="#e6f1f4" /></Small><Caret /></NavMenu>
              </NavGroup>
              <NavGroup $gap={6}>
                <NavMenu aria-label="Display settings"><Small><path d="M8 17h7v4H8z" fill="#fff" /><rect x="1" y="1" width="20" height="16" fill="#fff" /><rect x="4" y="4" width="14" height="10" fill="url(#blue)" stroke="#3f6ea8" /></Small><Caret /></NavMenu>
                <NavMenu aria-label="Grid"><Small><path d="M1 1h20v20H1zM5 1v20M9 1v20M13 1v20M17 1v20M1 5h20M1 9h20M1 13h20M1 17h20" fill="#eee" stroke="#555" strokeWidth="1" /></Small><Caret /></NavMenu>
                <NavMenu aria-label="Viewports"><Small><path d="M2 2h8v8H2zM12 2h8v8h-8zM2 12h8v8H2zM12 12h8v8h-8z" fill="#a9c7ea" stroke="#2f5c9a" /></Small><Caret /></NavMenu>
              </NavGroup>
            </NavBars>
            <Status>
              2 Bodies
              <svg width="21" height="20" viewBox="0 0 21 20"><path d="M10.500 1L20 19H1z" fill="url(#amber)" stroke="#5a5030" strokeWidth="1.300" strokeLinejoin="round" /><path d="M10.500 7v6M10.500 15v2" stroke="#222" strokeWidth="2" /></svg>
            </Status>
          </BottomRow>

          <Dialog onSubmit={e => e.preventDefault()}>
            <DialogHead><RoundMark />EDIT FEATURE</DialogHead>
            <DialogBody>
              <FieldLabel htmlFor="target">Target Body</FieldLabel>
              <Field><Picker id="target" type="button" $active><Pointer light />1 selected</Picker><IconButton type="button" aria-label="Clear target"><Cross /></IconButton></Field>
              <FieldLabel htmlFor="tools">Tool Bodies</FieldLabel>
              <Field><Picker id="tools" type="button"><Pointer />1 selected</Picker><IconButton type="button" aria-label="Clear tools"><Cross /></IconButton></Field>
              <FieldLabel htmlFor="operation">Operation</FieldLabel>
              <Field>
                <OperationSelect id="operation" defaultValue="Cut"><option>Cut</option></OperationSelect>
                <OverLeft><svg width="21" height="21" viewBox="0 0 21 21"><path d="M1 9h19v11H1z" fill="#5590c4" stroke="#111" strokeWidth="1.500" /><rect x="5" y="1" width="11" height="13" fill="#fff" stroke="#111" strokeWidth="1.500" /><path d="M5 9h11" stroke="#888" /></svg></OverLeft>
                <OverRight><Caret /></OverRight>
              </Field>
              <FieldLabel htmlFor="component" $off>New Component</FieldLabel>
              <Field><Check id="component" type="checkbox" disabled /></Field>
              <FieldLabel htmlFor="keep">Keep Tools</FieldLabel>
              <Field><Check id="keep" type="checkbox" /></Field>
            </DialogBody>
            <DialogFoot>
              <DialogButton>OK</DialogButton>
              <DialogButton type="button">Cancel</DialogButton>
            </DialogFoot>
          </Dialog>
        </Viewport>

        <Timeline>
          <Transport>
            {transport.map(([name, d]) => <IconButton key={name} $w={20} aria-label={name}><svg width="18" height="20" viewBox="0 0 18 20"><path d={d} fill="#4d4d4d" /></svg></IconButton>)}
          </Transport>
          <Steps>
            {steps.map((step, i) => (
              <Step key={i} $tone={step.tone} $faded={step.faded}>
                <IconButton aria-label={step.kind}><Small>{stepIcons[step.kind]}</Small></IconButton>
                <Tick $edge={i === 0 ? 'first' : i === steps.length - 1 ? 'last' : undefined} />
                {step.hatch && <HatchMark><HatchIcon /></HatchMark>}
              </Step>
            ))}
          </Steps>
          <Marker width="16" height="40" viewBox="0 0 16 40" aria-label="Timeline marker"><path d="M0 0h16v4L9 12v28H7V12L0 4z" fill="#606060" /></Marker>
          <TimelineEnd>
            <IconButton aria-label="Timeline settings">
              <svg width="20" height="22" viewBox="0 0 22 22" fill="none" stroke="#606060"><circle cx="11" cy="11" r="6" strokeWidth="4" /><circle cx="11" cy="11" r="9" strokeWidth="4" strokeDasharray="3.530 3.530" /><circle cx="11" cy="11" r="1.500" fill="#606060" /></svg>
            </IconButton>
          </TimelineEnd>
        </Timeline>
      </Shell>
      <DesktopEdge />
    </Screen>
  );
}
